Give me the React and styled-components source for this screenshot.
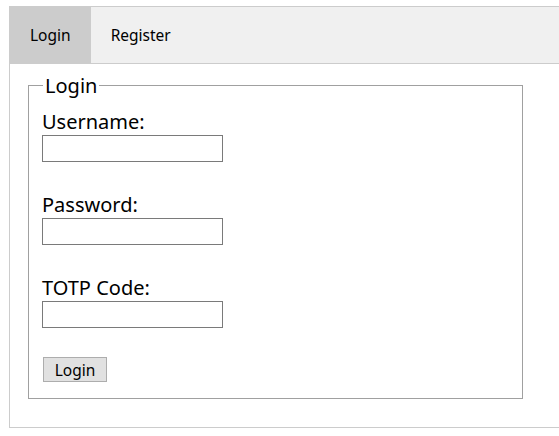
import React from "react";
import styled, { createGlobalStyle } from "styled-components";

const Global = createGlobalStyle`
  html, body { margin: 0; padding: 0; background: #fff; overflow: hidden; }
  body { font-family: "Noto Sans", "Open Sans", sans-serif; color: #000; }
`;

const Frame = styled.div`
  margin: 6px 0 0 9px;
  width: 550px;
  border: 1px solid #cccccc;
  border-right: none;
  box-sizing: border-box;
`;

const TabBar = styled.div`
  display: flex;
  height: 56px;
  background: #f0f0f0;
  border-bottom: 1px solid #cccccc;
`;

const Tab = styled.div`
  display: flex;
  align-items: center;
  padding: 0 20px;
  font-size: 15.5px;
  background: ${(p) => (p.$active ? "#cccccc" : "transparent")};
`;

const Content = styled.div`
  padding: 8px 18px 28px 18px;
`;

const FieldSet = styled.fieldset`
  width: 495px;
  box-sizing: border-box;
  margin: 0;
  padding: 9px 13px 16px 13px;
  border: 1px solid #a0a0a0;
`;

const Legend = styled.legend`
  font-size: 20px;
  line-height: 27px;
  padding: 0 2px;
  margin-left: 1px;
`;

const Group = styled.div`
  display: flex;
  flex-direction: column;
  align-items: flex-start;
  margin-bottom: 29px;
`;

const Label = styled.label`
  font-size: 20px;
  line-height: 27px;
  height: 27px;
`;

const Input = styled.input`
  width: 181px;
  height: 27px;
  box-sizing: border-box;
  margin: 0;
  border: 1px solid #7a7a7a;
  background: #fff;
  outline: none;
`;

const Button = styled.button`
  margin: 0 0 0 1px;
  height: 25px;
  width: 64px;
  box-sizing: border-box;
  border: 1px solid #adadad;
  background: #e1e1e1;
  font-family: "Noto Sans", sans-serif;
  font-size: 15.5px;
  line-height: 20px;
  padding: 0;
  color: #000;
`;

export default function App() {
  return (
    <>
      <Global />
      <Frame>
        <TabBar>
          <Tab $active>Login</Tab>
          <Tab>Register</Tab>
        </TabBar>
        <Content>
          <FieldSet>
            <Legend>Login</Legend>
            <Group>
              <Label>Username:</Label>
              <Input type="text" />
            </Group>
            <Group>
              <Label>Password:</Label>
              <Input type="password" />
            </Group>
            <Group>
              <Label>TOTP Code:</Label>
              <Input type="text" />
            </Group>
            <Button>Login</Button>
          </FieldSet>
        </Content>
      </Frame>
    </>
  );
}
